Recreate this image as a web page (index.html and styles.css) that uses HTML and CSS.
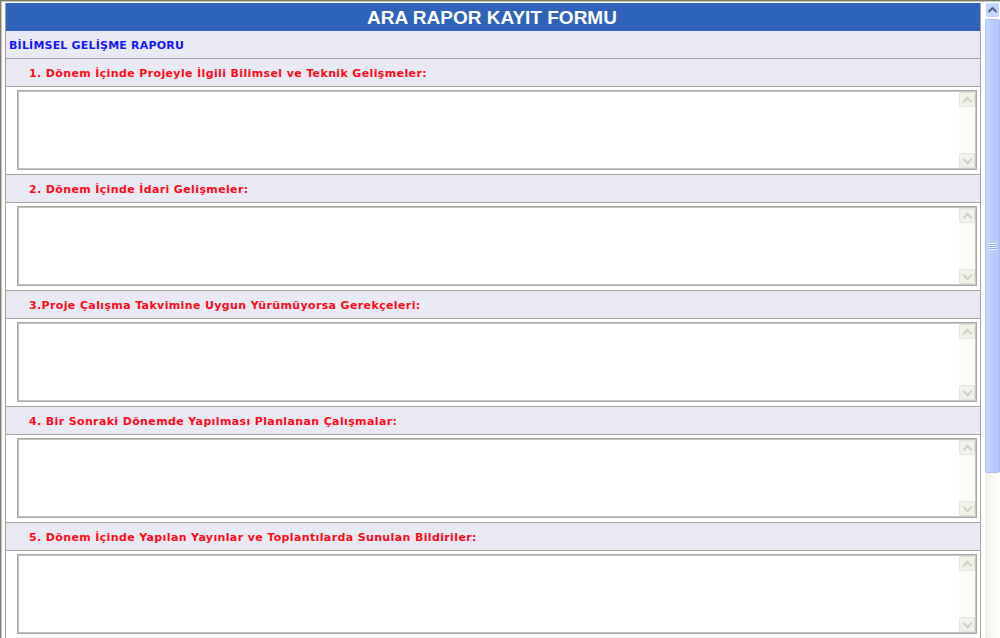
FILE: index.html
```html
<!DOCTYPE html>
<html lang="tr">
<head>
  <meta charset="UTF-8" />
  <meta name="viewport" content="width=device-width, initial-scale=1.0"/>
  <title>Ara Rapor Kayıt Formu</title>
  <link rel="stylesheet" href="styles.css">
</head>
<body>
  <div class="screen">
    <div class="frame">
      <div class="page">
        <form class="report">
          <div class="form-title">ARA RAPOR KAYIT FORMU</div>
          <div class="section-title">BİLİMSEL GELİŞME RAPORU</div>

          <div class="label-row">1. Dönem İçinde Projeyle İlgili Bilimsel ve Teknik Gelişmeler:</div>
          <div class="field-row">
            <div class="textbox">
              <textarea name="gelisme1"></textarea>
              <div class="tscroll"><span class="tbtn up"></span><span class="ttrack"></span><span class="tbtn down"></span></div>
            </div>
          </div>

          <div class="label-row">2. Dönem İçinde İdari Gelişmeler:</div>
          <div class="field-row">
            <div class="textbox">
              <textarea name="gelisme2"></textarea>
              <div class="tscroll"><span class="tbtn up"></span><span class="ttrack"></span><span class="tbtn down"></span></div>
            </div>
          </div>

          <div class="label-row">3.Proje Çalışma Takvimine Uygun Yürümüyorsa Gerekçeleri:</div>
          <div class="field-row">
            <div class="textbox">
              <textarea name="gerekce"></textarea>
              <div class="tscroll"><span class="tbtn up"></span><span class="ttrack"></span><span class="tbtn down"></span></div>
            </div>
          </div>

          <div class="label-row">4. Bir Sonraki Dönemde Yapılması Planlanan Çalışmalar:</div>
          <div class="field-row">
            <div class="textbox">
              <textarea name="plan"></textarea>
              <div class="tscroll"><span class="tbtn up"></span><span class="ttrack"></span><span class="tbtn down"></span></div>
            </div>
          </div>

          <div class="label-row">5. Dönem İçinde Yapılan Yayınlar ve Toplantılarda Sunulan Bildiriler:</div>
          <div class="field-row">
            <div class="textbox">
              <textarea name="yayinlar"></textarea>
              <div class="tscroll"><span class="tbtn up"></span><span class="ttrack"></span><span class="tbtn down"></span></div>
            </div>
          </div>
        </form>
      </div>

      <div class="scrollbar">
        <div class="sb-btn">
          <svg width="9" height="6" viewBox="0 0 9 6"><path d="M0.5 5 L4.5 1 L8.5 5" fill="none" stroke="#4d6185" stroke-width="2"/></svg>
        </div>
        <div class="sb-thumb">
          <svg width="8" height="8" viewBox="0 0 8 8"><path d="M0 1.5h8M0 3.5h8M0 5.5h8M0 7.5h8" stroke="#eef3fe" stroke-width="1"/><path d="M0 2.5h8M0 4.5h8M0 6.5h8" stroke="#8ea9e8" stroke-width="1"/></svg>
        </div>
        <div class="sb-track"></div>
      </div>
    </div>
  </div>
</body>
</html>
```

FILE: styles.css
```css
html, body {
  margin: 0;
  height: 100%;
  overflow: hidden;
  background: #ffffff;
}

.screen {
  height: 638px;
  box-sizing: border-box;
  border-top: 1px solid #7b7a72;
  border-left: 1px solid #7b7a72;
}

.frame {
  display: flex;
  height: 100%;
  box-sizing: border-box;
  border-top: 1px solid #c8c6b8;
  border-left: 1px solid #c8c6b8;
}

.page {
  flex: 1;
  padding: 1px 3px 0 3px;
  overflow: hidden;
}

.report {
  margin: 0;
  border: 1px solid #a3a3a3;
  border-top: none;
  font-family: "DejaVu Sans", Verdana, sans-serif;
  font-size: 11px;
  font-weight: bold;
}

.form-title {
  height: 28px;
  line-height: 29px;
  background: #2d64ba;
  color: #ffffff;
  text-align: center;
  font-family: "Liberation Sans", Arial, sans-serif;
  font-size: 19px;
  font-weight: bold;
  padding-right: 2px;
}

.section-title {
  height: 27px;
  line-height: 29px;
  padding-left: 3px;
  background: #e9e9f4;
  color: #1515ff;
  letter-spacing: 0.2px;
  border-bottom: 1px solid #a3a3a3;
}

.label-row {
  height: 27px;
  line-height: 30px;
  padding-left: 23px;
  background: #e9e9f4;
  color: #ff0a1a;
  letter-spacing: 0.37px;
  border-bottom: 1px solid #a3a3a3;
}

.field-row {
  padding: 3px 3px 4px 11px;
  background: #ffffff;
  border-bottom: 1px solid #a3a3a3;
}

.textbox {
  display: flex;
  height: 78px;
  border: 1px solid #a5a5a5;
  outline: 1px solid #c4c4c4;
  outline-offset: -2px;
  background: #ffffff;
}

.textbox textarea {
  flex: 1;
  border: none;
  resize: none;
  outline: none;
  overflow: hidden;
  margin: 0;
  padding: 2px;
  font-family: "DejaVu Sans", Verdana, sans-serif;
  font-size: 11px;
}

.tscroll {
  display: flex;
  flex-direction: column;
  width: 16px;
  margin: 1px 1px 1px 0;
  background: #fcfcf4;
}

.tbtn {
  height: 15px;
  box-sizing: border-box;
  border: 1px solid #e4e4dc;
  border-radius: 2px;
  background: #f2f2ea;
  position: relative;
}

.tbtn::after {
  content: "";
  position: absolute;
  left: 4px;
  width: 5px;
  height: 5px;
  border-left: 2px solid #cfcfc6;
  border-top: 2px solid #cfcfc6;
}

.tbtn.up::after {
  top: 5px;
  transform: rotate(45deg);
}

.tbtn.down::after {
  top: 2px;
  transform: rotate(225deg);
}

.ttrack {
  flex: 1;
}

.scrollbar {
  width: 15px;
  margin-left: 1px;
  display: flex;
  flex-direction: column;
  background: linear-gradient(to right, #f3f1ea, #fefefb);
}

.sb-btn {
  height: 16px;
  box-sizing: border-box;
  border: 1px solid #ffffff;
  border-radius: 2px;
  background: #c4d4fc;
  display: flex;
  align-items: center;
  justify-content: center;
}

.sb-thumb {
  height: 454px;
  margin-top: 1px;
  box-sizing: border-box;
  border: 1px solid #a7bdf3;
  border-radius: 2px;
  background: linear-gradient(to right, #c9d8fd, #b8cdfa 40%, #b4c9f8);
  display: flex;
  align-items: center;
  justify-content: center;
}

.sb-track {
  flex: 1;
}
```
